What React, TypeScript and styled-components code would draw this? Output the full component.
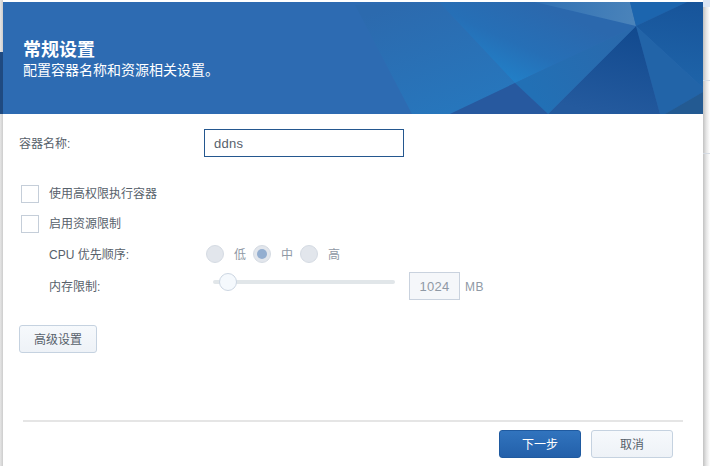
import styled, { createGlobalStyle } from 'styled-components'

const GlobalStyle = createGlobalStyle`
  html, body {
    margin: 0;
    padding: 0;
    background: #fff;
  }
  body {
    font-family: "Liberation Sans", "Noto Sans CJK SC", sans-serif;
    font-size: 12px;
    color: #414b55;
  }
`

const Screen = styled.div`
  position: relative;
  width: 710px;
  height: 466px;
  overflow: hidden;
  padding: 2px 7px 0 3px;
  box-sizing: border-box;
  background:
    linear-gradient(to right, #c2c2c2, #e4e4e4 45%, #fff) right 0 top 7px / 7px 100% no-repeat,
    linear-gradient(to right, #e6e6e6, #cdcdcd) left 0 top 0 / 3px 100% no-repeat,
    #fff;
`

const LeftStrip = styled.div`
  position: absolute;
  left: 0;
  top: 52px;
  width: 3px;
  height: 62px;
  background: #1f4a80;
`

const CornerTint = styled.div`
  position: absolute;
  right: 0;
  top: 0;
  width: 7px;
  height: 7px;
  background: #dbe5f4;
`

const EdgeLine = styled.div<{ $top: number }>`
  position: absolute;
  right: 0;
  top: ${p => p.$top}px;
  width: 7px;
  height: 1px;
  background: #d5dbe3;
`

const Dialog = styled.div`
  width: 700px;
  height: 464px;
  background: #fff;
  display: flex;
  flex-direction: column;
`

const Banner = styled.header`
  position: relative;
  height: 112px;
  flex: none;
  background: #2d6bb2;
  overflow: hidden;
  padding: 38px 20px 0;
  box-sizing: border-box;
  color: #fff;
`

const BannerArt = styled.svg`
  position: absolute;
  inset: 0;
  width: 100%;
  height: 100%;
`

const Title = styled.h1`
  position: relative;
  margin: 0;
  font-size: 18px;
  line-height: 21px;
  font-weight: 700;
`

const Subtitle = styled.p`
  position: relative;
  margin: 0;
  font-size: 14px;
  line-height: 18px;
`

const Body = styled.main`
  flex: 1;
  display: flex;
  flex-direction: column;
  padding: 15px 16px 0;
`

const NameRow = styled.div`
  display: flex;
  align-items: center;
  height: 28px;
  margin-bottom: 28px;
`

const NameLabel = styled.label`
  width: 185px;
  padding-bottom: 2px;
  color: #57616b;
`

const NameInput = styled.div`
  width: 200px;
  height: 28px;
  box-sizing: border-box;
  border: 1px solid #24578f;
  padding: 0 9px;
  display: flex;
  align-items: center;
  font-size: 13px;
  letter-spacing: 0.3px;
  color: #57616b;
`

const CheckRow = styled.div`
  display: flex;
  align-items: center;
  gap: 10px;
  height: 18px;
  margin: 0 0 12px 2px;
  color: #57616b;
`

const CheckBox = styled.span`
  width: 18px;
  height: 18px;
  box-sizing: border-box;
  border: 1px solid #c5ced9;
  background: #fff;
`

const CheckLabel = styled.span`
  padding-bottom: 3px;
`

const SubRow = styled.div`
  display: flex;
  align-items: center;
  height: 18px;
  padding-left: 30px;
  margin-bottom: 14px;
  color: #57616b;
`

const SubLabel = styled.span`
  width: 157px;
  padding-bottom: 2px;
`

const RadioGroup = styled.div`
  display: flex;
  align-items: center;
`

const RadioOption = styled.span`
  display: flex;
  align-items: center;
  gap: 10px;
  width: 47px;
  color: #8f99a5;
`

const RadioText = styled.span`
  padding-bottom: 2px;
`

const Radio = styled.span<{ $checked?: boolean }>`
  width: 18px;
  height: 18px;
  box-sizing: border-box;
  border-radius: 50%;
  border: 1px solid #d5dbe3;
  background: #e2e6ec;
  display: flex;
  align-items: center;
  justify-content: center;

  &::after {
    content: '';
    width: 10px;
    height: 10px;
    border-radius: 50%;
    background: ${p => (p.$checked ? '#93aed0' : 'transparent')};
  }
`

const SliderTrack = styled.div`
  position: relative;
  width: 182px;
  height: 4px;
  margin: 0 14px 9px 7px;
  border-radius: 2px;
  background: #e1e6e9;
`

const SliderThumb = styled.span`
  position: absolute;
  left: 6px;
  top: -7px;
  width: 18px;
  height: 18px;
  box-sizing: border-box;
  border-radius: 50%;
  border: 1px solid #ccd6e2;
  background: #f5f9fd;
`

const MemoryBox = styled.div`
  flex: none;
  width: 51px;
  height: 28px;
  box-sizing: border-box;
  border: 1px solid #c9d2de;
  background: #f5f7fa;
  color: #8f99a5;
  display: flex;
  align-items: center;
  justify-content: center;
  font-size: 13px;
  letter-spacing: 0.3px;
`

const Unit = styled.span`
  margin-left: 5px;
  padding-top: 2px;
  color: #8f99a5;
  font-size: 12px;
  letter-spacing: 0.4px;
`

const Button = styled.button<{ $primary?: boolean }>`
  height: 28px;
  box-sizing: border-box;
  border-radius: 3px;
  font: inherit;
  padding: 0 0 2px;
  border: 1px solid ${p => (p.$primary ? '#1f5aa0' : '#c5d2e0')};
  background: ${p =>
    p.$primary
      ? 'linear-gradient(#3174be, #2360aa)'
      : 'linear-gradient(#f6f9fc, #eef2f7)'};
  color: ${p => (p.$primary ? '#fff' : '#57616b')};
`

const AdvancedButton = styled(Button)`
  align-self: flex-start;
  width: 78px;
  margin-top: 16px;
`

const Footer = styled.footer`
  margin: auto 20px 0 20px;
  height: 46px;
  flex: none;
  box-sizing: border-box;
  border-top: 2px solid #e5e5e5;
  display: flex;
  justify-content: flex-end;
  gap: 10px;
  padding: 8px 10px 0 0;
`

const FooterButton = styled(Button)`
  width: 82px;
`

function BannerPolygons() {
  return (
    <BannerArt viewBox="0 0 700 112" aria-hidden="true">
      <defs>
        <linearGradient id="leftFacet" gradientUnits="userSpaceOnUse" x1="400" y1="0" x2="440" y2="112">
          <stop offset="0" stopColor="#2c6aae" />
          <stop offset="1" stopColor="#2776bc" />
        </linearGradient>
        <linearGradient id="midFacet" gradientUnits="userSpaceOnUse" x1="545" y1="5" x2="510" y2="82">
          <stop offset="0" stopColor="#2b68ad" />
          <stop offset="0.55" stopColor="#266fb6" />
          <stop offset="1" stopColor="#2180c8" />
        </linearGradient>
        <linearGradient id="darkFacet" gradientUnits="userSpaceOnUse" x1="620" y1="24" x2="600" y2="112">
          <stop offset="0" stopColor="#124a8f" />
          <stop offset="1" stopColor="#245a9e" />
        </linearGradient>
        <linearGradient id="lowerFacet" gradientUnits="userSpaceOnUse" x1="530" y1="90" x2="620" y2="30">
          <stop offset="0" stopColor="#2270b5" />
          <stop offset="1" stopColor="#2a69ac" />
        </linearGradient>
        <linearGradient id="topFacet" gradientUnits="userSpaceOnUse" x1="540" y1="0" x2="630" y2="20">
          <stop offset="0" stopColor="#3272b4" />
          <stop offset="1" stopColor="#4a83ba" />
        </linearGradient>
        <linearGradient id="rightFacet" gradientUnits="userSpaceOnUse" x1="690" y1="0" x2="680" y2="80">
          <stop offset="0" stopColor="#17549a" />
          <stop offset="1" stopColor="#1e63a8" />
        </linearGradient>
      </defs>
      <polygon points="352,3 436,0 512,81 447,112 409,112" fill="url(#leftFacet)" />
      <polygon points="436,0 532,0 633,24 512,81" fill="url(#midFacet)" />
      <polygon points="532,0 627,0 633,24" fill="url(#topFacet)" />
      <polygon points="627,0 684,0 633,24" fill="#1c65ae" />
      <polygon points="684,0 700,0 700,86 633,24" fill="url(#rightFacet)" />
      <polygon points="633,24 700,86 700,90 662,112 657,112" fill="#2264a8" />
      <polygon points="633,24 657,112 545,112" fill="url(#darkFacet)" />
      <polygon points="633,24 545,112 512,81" fill="url(#lowerFacet)" />
      <polygon points="512,81 545,112 447,112" fill="#27599f" />
      <polygon points="700,90 700,112 662,112" fill="#235a92" />
    </BannerArt>
  )
}

export default function App() {
  return (
    <>
      <GlobalStyle />
      <Screen>
        <LeftStrip />
        <CornerTint />
        <EdgeLine $top={80} />
        <EdgeLine $top={153} />
        <Dialog>
          <Banner>
            <BannerPolygons />
            <Title>常规设置</Title>
            <Subtitle>配置容器名称和资源相关设置。</Subtitle>
          </Banner>
          <Body>
            <NameRow>
              <NameLabel>容器名称:</NameLabel>
              <NameInput>ddns</NameInput>
            </NameRow>
            <CheckRow>
              <CheckBox />
              <CheckLabel>使用高权限执行容器</CheckLabel>
            </CheckRow>
            <CheckRow>
              <CheckBox />
              <CheckLabel>启用资源限制</CheckLabel>
            </CheckRow>
            <SubRow>
              <SubLabel>CPU 优先顺序:</SubLabel>
              <RadioGroup>
                <RadioOption>
                  <Radio />
                  <RadioText>低</RadioText>
                </RadioOption>
                <RadioOption>
                  <Radio $checked />
                  <RadioText>中</RadioText>
                </RadioOption>
                <RadioOption>
                  <Radio />
                  <RadioText>高</RadioText>
                </RadioOption>
              </RadioGroup>
            </SubRow>
            <SubRow>
              <SubLabel>内存限制:</SubLabel>
              <SliderTrack>
                <SliderThumb />
              </SliderTrack>
              <MemoryBox>1024</MemoryBox>
              <Unit>MB</Unit>
            </SubRow>
            <AdvancedButton>高级设置</AdvancedButton>
          </Body>
          <Footer>
            <FooterButton $primary>下一步</FooterButton>
            <FooterButton>取消</FooterButton>
          </Footer>
        </Dialog>
      </Screen>
    </>
  )
}
